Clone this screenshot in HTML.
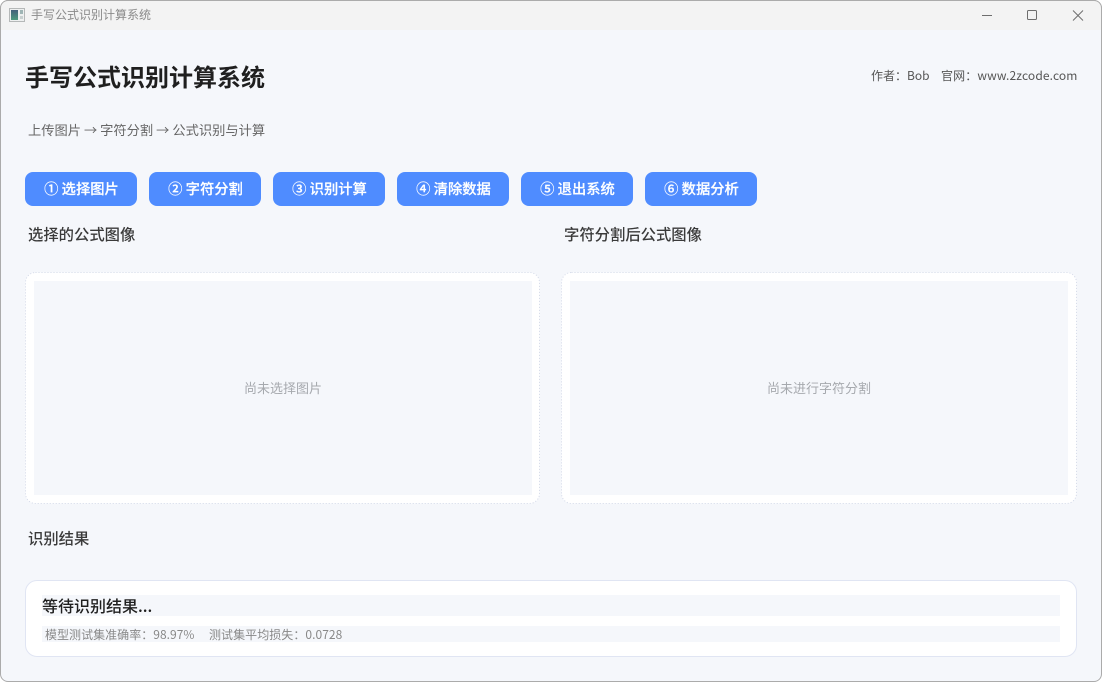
<!DOCTYPE html>
<html lang="zh-CN">
<head>
<meta charset="utf-8">
<title>手写公式识别计算系统</title>
<style>
html,body{margin:0;padding:0;width:1102px;height:682px;overflow:hidden;background:#fff}
*{box-sizing:border-box}
body{font-family:"Liberation Sans","Noto Sans CJK SC",sans-serif}
.cjk{font-family:"Noto Sans CJK SC","Liberation Sans",sans-serif}
#win{position:absolute;left:0;top:0;width:1102px;height:682px;background:#f5f7fb;border:1px solid #ababab;border-radius:8px;overflow:hidden}
.a{position:absolute;white-space:nowrap;line-height:1}
.btn{position:absolute;top:172px;width:112px;height:34px;padding-left:1px;background:#4f8cff;border-radius:8px;color:#fff;font-size:14.3px;font-weight:500;line-height:33px;text-align:center;white-space:nowrap;-webkit-text-stroke:.2px #fff}
.sec{font-size:15.33px;font-weight:500;color:#3a3a3a}
.inner{position:absolute;top:281px;height:214px;background:#f5f7fb;color:#a6a9ae;font-size:13px;line-height:214px;text-align:center}
</style>
</head>
<body>
<div id="win"></div>
<div class="a" style="left:0;top:0;width:1102px;height:30px;background:#f3f3f3;border:1px solid #ababab;border-bottom:0;border-radius:8px 8px 0 0"></div>
<svg class="a" style="left:9px;top:8px" width="16" height="14" viewBox="0 0 16 14">
<defs><linearGradient id="g" x1="0" y1="0" x2="0" y2="1"><stop offset="0" stop-color="#44607c"/><stop offset="1" stop-color="#4f9a7e"/></linearGradient></defs>
<rect x=".5" y=".5" width="15" height="13" fill="#eef0f0" stroke="#b5b8b8"/>
<rect x="2" y="2" width="7" height="10" fill="url(#g)"/>
<rect x="11" y="2" width="3" height="4" fill="#9fb5b5"/>
<rect x="11" y="8" width="3" height="3" fill="#c8d0d0"/>
</svg>
<div class="a cjk" style="left:31px;top:9px;font-size:12px;color:#8a8a8a">手写公式识别计算系统</div>
<svg class="a" style="left:975px;top:5px" width="120" height="20" viewBox="0 0 120 20" fill="none" stroke="#6e6e6e" stroke-width="1">
<path d="M7 10.5h10"/>
<rect x="52.5" y="5.5" width="9" height="9" rx="1"/>
<path d="M98 5.5l10 10M108 5.5l-10 10"/>
</svg>

<div class="a cjk" style="left:25px;top:61px;font-size:24px;font-weight:700;color:#1f1f1f;line-height:30px">手写公式识别计算系统</div>
<div class="a cjk" style="left:871px;top:68px;font-size:12px;color:#555;line-height:15px">作者：Bob</div>
<div class="a cjk" style="left:941px;top:68px;font-size:12px;color:#555;line-height:15px;letter-spacing:.12px">官网：www.2zcode.com</div>
<div class="a cjk" style="left:28px;top:122px;font-size:13.25px;color:#666;line-height:16px">上传图片 → 字符分割 → 公式识别与计算</div>

<div class="btn cjk" style="left:25px">① 选择图片</div>
<div class="btn cjk" style="left:149px">② 字符分割</div>
<div class="btn cjk" style="left:273px">③ 识别计算</div>
<div class="btn cjk" style="left:397px">④ 清除数据</div>
<div class="btn cjk" style="left:521px">⑤ 退出系统</div>
<div class="btn cjk" style="left:645px">⑥ 数据分析</div>

<div class="a sec cjk" style="left:28px;top:226px;line-height:17px">选择的公式图像</div>
<div class="a sec cjk" style="left:564px;top:226px;line-height:17px">字符分割后公式图像</div>

<svg class="a" style="left:25px;top:272px" width="1052" height="232" viewBox="0 0 1052 232">
<rect x=".5" y=".5" width="514" height="231" rx="10" fill="#fff" stroke="#d3d9e8" stroke-dasharray="1 2"/>
<rect x="536.5" y=".5" width="515" height="231" rx="10" fill="#fff" stroke="#d3d9e8" stroke-dasharray="1 2"/>
</svg>
<div class="inner cjk" style="left:34px;width:498px">尚未选择图片</div>
<div class="inner cjk" style="left:570px;width:498px">尚未进行字符分割</div>

<div class="a sec cjk" style="left:28px;top:530px;line-height:17px">识别结果</div>

<div class="a" style="left:25px;top:580px;width:1052px;height:77px;background:#fff;border:1px solid #e0e5f3;border-radius:12px"></div>
<div class="a" style="left:42px;top:595px;width:1018px;height:21px;background:#f5f7fb"></div>
<div class="a cjk" style="left:42px;top:593px;font-size:16px;font-weight:500;color:#1f1f1f;line-height:24px">等待识别结果...</div>
<div class="a" style="left:42px;top:626px;width:1018px;height:16px;background:#f5f7fb"></div>
<div class="a cjk" style="left:45px;top:626px;font-size:12px;color:#888;line-height:17px;letter-spacing:.03px">模型测试集准确率：98.97%</div>
<div class="a cjk" style="left:209px;top:626px;font-size:12px;color:#888;line-height:17px;letter-spacing:.05px">测试集平均损失：0.0728</div>
</body>
</html>
